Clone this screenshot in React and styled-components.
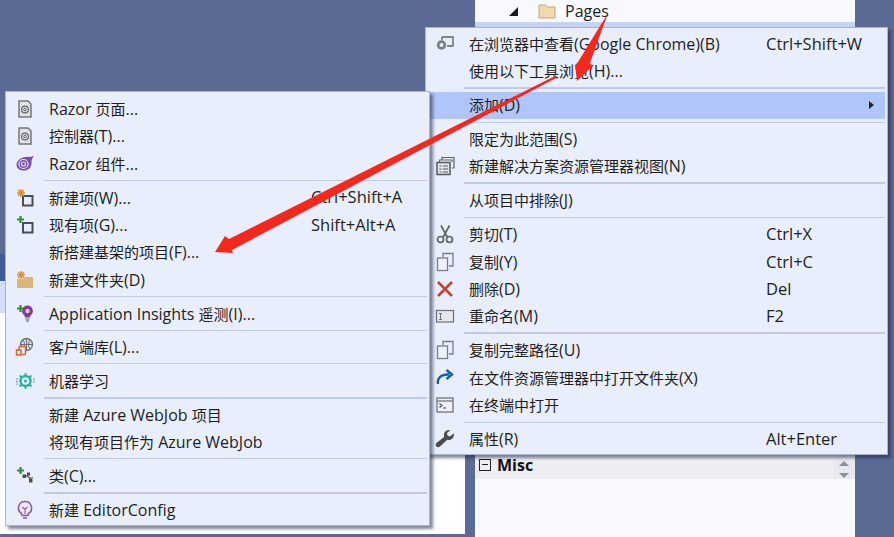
import React from "react";
import styled, { createGlobalStyle } from "styled-components";

const Global = createGlobalStyle`
  html, body { margin: 0; padding: 0; background: #5c6a96; overflow: hidden; }
  #root { width: 894px; height: 537px; }
`;

const Page = styled.div`
  position: relative;
  width: 894px;
  height: 537px;
  display: flex;
  gap: 10px;
  background: #5c6a96;
  font-family: "Open Sans", "Noto Sans CJK SC", sans-serif;
  font-size: 15px;
  line-height: 20px;
  color: #1e1e1e;
  overflow: hidden;
`;

const LeftWindow = styled.div`
  width: 465px;
  height: 534px;
  display: flex;
  flex-direction: column;
  padding-top: 254px;
  box-sizing: border-box;
`;
const DarkBand = styled.div`
  height: 27px;
  background: #3f5b9b;
`;
const PaleBand = styled.div`
  height: 32px;
  background: #d3def4;
`;
const WhiteFill = styled.div`
  flex: 1;
  background: #ffffff;
`;

const RightPanel = styled.div`
  width: 380px;
  display: flex;
  flex-direction: column;
  background: #f8f9fe;
`;
const TreeRow = styled.div`
  height: 22px;
  display: flex;
  align-items: center;
  padding-left: 34px;
  gap: 8px;
`;
const Caret = styled.span`
  width: 0;
  height: 0;
  border-style: solid;
  border-width: 0 0 9px 9px;
  border-color: transparent transparent #1c1c1c transparent;
  margin-right: 11px;
`;
const Selected = styled.div`
  height: 430px;
  background: #c5d3f5;
`;
const MiscRow = styled.div`
  height: 24px;
  margin-top: 3px;
  display: flex;
  align-items: center;
  box-sizing: border-box;
  background: #eeedf2;
  padding: 0 0 4px 4px;
  font-weight: 700;
  font-size: 16px;
  gap: 6px;
  color: #111;
`;
const Collapse = styled.span`
  width: 10px;
  height: 10px;
  border: 1px solid #222;
  position: relative;
  &::after {
    content: "";
    position: absolute;
    left: 2px;
    right: 2px;
    top: 4px;
    height: 1px;
    background: #222;
  }
`;
const Scroll = styled.div`
  margin: 0 0 -4px auto;
  width: 22px;
  align-self: stretch;
  display: flex;
  flex-direction: column;
  align-items: center;
  justify-content: flex-end;
  gap: 7px;
  padding-bottom: 1px;
  box-sizing: border-box;
  background: #e8e8ee;
`;
const ScrollArrow = styled.span`
  width: 0;
  height: 0;
  border-left: 5px solid transparent;
  border-right: 5px solid transparent;
  ${(p) => (p.$down ? "border-top: 5px solid #8b8f9c;" : "border-bottom: 5px solid #8b8f9c;")}
`;

const Menu = styled.div`
  position: absolute;
  left: ${(p) => p.$x}px;
  top: ${(p) => p.$y}px;
  width: ${(p) => p.$w}px;
  height: ${(p) => p.$h}px;
  box-sizing: border-box;
  padding: ${(p) => p.$top}px 2px 0 0;
  background: #e9eefd;
  border: 1px solid #a6b4d8;
  box-shadow: 3px 3px 3px rgba(30, 36, 60, 0.55);
`;
const Row = styled.div`
  height: 27.33px;
  display: grid;
  grid-template-columns: 38px ${(p) => p.$label}px 1fr 16px;
  align-items: center;
  white-space: nowrap;
  background: ${(p) => (p.$hot ? "#b0c6fb" : "transparent")};
`;
const IconSlot = styled.span`
  display: flex;
  justify-content: center;
  align-items: center;
  height: 20px;
`;
const Label = styled.span`
  padding-left: 5px;
`;
const Latin = styled.span`
  font-size: 16px;
  line-height: 1;
`;
const Keys = styled.span`
  font-size: 16.5px;
  line-height: 1;
`;
const SubArrow = styled.span`
  width: 0;
  height: 0;
  border-top: 4px solid transparent;
  border-bottom: 4px solid transparent;
  border-left: 5px solid #222;
`;
const Sep = styled.div`
  height: ${(p) => (p.$thick ? 2 : 1)}px;
  margin: ${(p) => (p.$thick ? "2.33px" : "2.83px")} 0 ${(p) => (p.$thick ? "2.34px" : p.$tight ? "1.84px" : "2.84px")} 38px;
  background: #bfcae8;
`;
const Glyph = styled.svg`
  width: 20px;
  height: 20px;
  display: block;
`;
const Overlay = styled.svg`
  position: absolute;
  left: 0;
  top: 0;
  width: 894px;
  height: 537px;
  pointer-events: none;
`;

const G = "#5f6268";
const Page3 = () => (
  <>
    <path d="M4 2h9l3 3v13H4z" fill="#dfe2ea" stroke="#777" strokeWidth="1.5" />
    <circle cx="10" cy="10.5" r="3.4" fill="none" stroke="#666" strokeWidth="1.2" />
    <circle cx="10" cy="10.5" r="1.3" fill="none" stroke="#666" strokeWidth="1" />
  </>
);
const Square = () => <rect x="8" y="8" width="9.5" height="9.5" fill="#e9eefd" stroke="#4b4d52" strokeWidth="2" />;
const Star = () => (
  <path d="M6 1v8M2 5h8M3 2l6 6M9 2l-6 6" stroke="#d9922e" strokeWidth="1.5" />
);
const Plus = () => <path d="M5.500 1v7M2 4.500h7" stroke="#2f8f3a" strokeWidth="2.2" />;

const icons = {
  page: <Page3 />,
  razor: (
    <>
      <path d="M18.500 2c-2 .5-3 1-4 1C9 2 2 5 1.500 10.500 1.500 15 6 17 10 16.500c4.500-.5 7-4 6.500-9.500.5-2 1.500-3.500 2-5z" fill="#7d4fb0" />
      <circle cx="8.500" cy="10" r="4.500" fill="none" stroke="#e6dff3" strokeWidth="1.200" />
      <circle cx="8.500" cy="10" r="2" fill="none" stroke="#e6dff3" strokeWidth="1.100" />
    </>
  ),
  newItem: (<><Square /><Star /></>),
  existing: (<><Square /><Plus /></>),
  newFolder: (
    <>
      <path d="M2 9h6l2-2h8v11H2z" fill="#dcb577" />
      <Star />
    </>
  ),
  insights: (
    <>
      <path d="M12.500 1.500a5.500 5.500 0 0 1 3 10l-.5 2h-5l-.5-2a5.500 5.500 0 0 1 3-10z" fill="#7f3d94" />
      <circle cx="12.500" cy="7" r="2.200" fill="#e3c6e8" />
      <path d="M10.500 15h4M11 17h3" stroke="#888" strokeWidth="1.500" />
      <Plus />
    </>
  ),
  library: (
    <>
      <circle cx="11.500" cy="7.500" r="6" fill="#d8dbe4" stroke="#6c6f76" strokeWidth="1.300" />
      <path d="M11.500 1.500v12M5.500 7.500h12M8 3c2 3 2 6 0 9M15 3c-2 3-2 6 0 9" fill="none" stroke="#6c6f76" strokeWidth="1" />
      <rect x="4" y="9.500" width="6.500" height="8" rx="1" fill="#e9eefd" stroke="#d8642b" strokeWidth="1.500" />
      <rect x="1.500" y="13" width="4.500" height="5" fill="#e9eefd" stroke="#d8642b" strokeWidth="1.500" />
    </>
  ),
  ml: (
    <>
      <circle cx="10.500" cy="10" r="5" fill="none" stroke="#2fb19a" strokeWidth="2.400" />
      <circle cx="10.500" cy="10" r="1.600" fill="#2fb19a" />
      <path d="M10.500 2v3M10.500 15v3M4.500 4.500l2 2M14.500 13.500l2 2M16.500 4.500l-2 2M6.500 13.500l-2 2" stroke="#2fb19a" strokeWidth="1.800" />
      <path d="M1 8h2M1 10.500h2M1 13h2M18 8h2M18 11h2" stroke="#2fb19a" strokeWidth="1" />
    </>
  ),
  cls: (
    <>
      <path d="M9 11l3-1.500 3 3 3-1" fill="none" stroke="#4b4d52" strokeWidth="1.200" />
      <rect x="7.500" y="8.500" width="3.500" height="3.500" fill="#4b4d52" />
      <rect x="12" y="6.500" width="3" height="3" fill="#4b4d52" />
      <rect x="14" y="13" width="3.500" height="3.500" fill="#4b4d52" />
      <Plus />
    </>
  ),
  bulb: (
    <>
      <path d="M10 1.500a6.500 6.500 0 0 1 3.500 12l-.5 2H7l-.5-2A6.500 6.500 0 0 1 10 1.500z" fill="#efe7f7" stroke="#8b57b5" strokeWidth="1.500" />
      <path d="M10 14V9M7.500 7l2.500 2.500L12.500 7" fill="none" stroke="#8b57b5" strokeWidth="1.100" />
      <path d="M8 18h4" stroke="#8b57b5" strokeWidth="1.500" />
    </>
  ),
  browser: (
    <>
      <path d="M7 3h11v9h-6" fill="none" stroke={G} strokeWidth="1.300" />
      <path d="M7 3v3" stroke={G} strokeWidth="1.300" />
      <circle cx="6.500" cy="11" r="4.700" fill="#7a7d84" />
      <circle cx="6.500" cy="11" r="2" fill="#e9eefd" />
    </>
  ),
  view: (
    <>
      <path d="M7 4V1.500h12V12h-2M4.500 6V4H17v2" fill="none" stroke={G} strokeWidth="1.200" />
      <rect x="2" y="6.500" width="13" height="12" fill="#e2e5ee" stroke="#55585e" strokeWidth="1.500" />
      <path d="M4.500 10h2M8 10h5M4.500 13h2M8 13h5M4.500 16h2M8 16h5" stroke="#55585e" strokeWidth="1" />
    </>
  ),
  cut: (
    <>
      <path d="M6 1.500l6.500 12M14.500 1.500L8 13.500" fill="none" stroke="#606368" strokeWidth="1.700" />
      <circle cx="5.500" cy="15.500" r="3" fill="none" stroke="#606368" strokeWidth="1.700" />
      <circle cx="14.500" cy="15.500" r="3" fill="none" stroke="#606368" strokeWidth="1.700" />
    </>
  ),
  copy: (
    <>
      <path d="M8 5V1.500h10V14h-4" fill="none" stroke="#7a7d84" strokeWidth="1.300" />
      <rect x="2.500" y="6" width="10" height="12.500" fill="#eef1fa" stroke="#7a7d84" strokeWidth="1.300" />
    </>
  ),
  del: <path d="M3 3l14 14M17 3L3 17" stroke="#c4402f" strokeWidth="2.600" />,
  rename: (
    <>
      <rect x="1.500" y="4.500" width="17" height="11.500" fill="#e6e8f0" stroke="#6e7077" strokeWidth="1.200" />
      <path d="M4 7.500h3M5.500 7.500v6M4 13.500h3" stroke="#6e7077" strokeWidth="1" />
    </>
  ),
  open: (
    <path d="M3 16c-1-6 3-10 11-9.500M11.500 2l5.500 4.500-5.500 4.500" fill="none" stroke="#14609e" strokeWidth="2.400" />
  ),
  terminal: (
    <>
      <rect x="2" y="3" width="16" height="14" fill="#eef1fa" stroke="#7a7d84" strokeWidth="1.400" />
      <path d="M2 6h16" stroke="#7a7d84" strokeWidth="1.400" />
      <path d="M4.500 8.500l2.500 2-2.500 2M8 13h3" fill="none" stroke="#44474d" strokeWidth="1.100" />
    </>
  ),
  wrench: (
    <path d="M18.500 4.500l-3.500 3-2.500-1-.5-2.500 3.500-3c-3-.5-6 1-6.500 4-.2 1 0 2 .3 2.700L1.500 14c-1 1-1 2.500 0 3.500s2.500 1 3.500 0l7.300-6.800c1 .3 2 .4 3 .1 2.500-.7 4-3.300 3.700-5.800z" fill="#4a4c51" />
  ),
};

const Mixed = ({ text }) =>
  text.split(/([\u4e00-\u9fff]+)/).map((part, i) =>
    i % 2 ? part : part && <Latin key={i}>{part}</Latin>
  );

const Item = ({ icon, label, keys, hot, sub, width }) => (
  <Row $label={width} $hot={hot}>
    <IconSlot>{icon && <Glyph viewBox="0 0 20 20">{icons[icon]}</Glyph>}</IconSlot>
    <Label><Mixed text={label} /></Label>
    <Keys>{keys}</Keys>
    {sub && <SubArrow />}
  </Row>
);

const rightItems = [
  { icon: "browser", label: "在浏览器中查看(Google Chrome)(B)", keys: "Ctrl+Shift+W" },
  { label: "使用以下工具浏览(H)..." },
  { sep: 2 },
  { label: "添加(D)", hot: true, sub: true },
  { sep: 1 },
  { label: "限定为此范围(S)" },
  { icon: "view", label: "新建解决方案资源管理器视图(N)" },
  { sep: 2 },
  { label: "从项目中排除(J)" },
  { sep: 1 },
  { icon: "cut", label: "剪切(T)", keys: "Ctrl+X" },
  { icon: "copy", label: "复制(Y)", keys: "Ctrl+C" },
  { icon: "del", label: "删除(D)", keys: "Del" },
  { icon: "rename", label: "重命名(M)", keys: "F2" },
  { sep: 2 },
  { icon: "copy", label: "复制完整路径(U)" },
  { icon: "open", label: "在文件资源管理器中打开文件夹(X)" },
  { icon: "terminal", label: "在终端中打开" },
  { sep: 1 },
  { icon: "wrench", label: "属性(R)", keys: "Alt+Enter" },
];

const leftItems = [
  { icon: "page", label: "Razor 页面..." },
  { icon: "page", label: "控制器(T)..." },
  { icon: "razor", label: "Razor 组件..." },
  { sep: 1 },
  { icon: "newItem", label: "新建项(W)...", keys: "Ctrl+Shift+A" },
  { icon: "existing", label: "现有项(G)...", keys: "Shift+Alt+A" },
  { label: "新搭建基架的项目(F)..." },
  { icon: "newFolder", label: "新建文件夹(D)" },
  { sep: 1 },
  { icon: "insights", label: "Application Insights 遥测(I)..." },
  { sep: 1, tight: true },
  { icon: "library", label: "客户端库(L)..." },
  { sep: 1 },
  { icon: "ml", label: "机器学习" },
  { sep: 2 },
  { label: "新建 Azure WebJob 项目" },
  { label: "将现有项目作为 Azure WebJob" },
  { sep: 1 },
  { icon: "cls", label: "类(C)..." },
  { sep: 2 },
  { icon: "bulb", label: "新建 EditorConfig" },
];

const renderMenu = (items, width) =>
  items.map((it, i) =>
    it.sep ? <Sep key={i} $thick={it.sep === 2} $tight={it.tight} /> : <Item key={i} {...it} width={width} />
  );

export default function App() {
  return (
    <Page>
      <Global />
      <LeftWindow>
        <DarkBand />
        <PaleBand />
        <WhiteFill />
      </LeftWindow>
      <RightPanel>
        <TreeRow>
          <Caret />
          <Glyph viewBox="0 0 20 20">
            <path d="M2 4h6l2 2h8v11H2z" fill="#eed9b0" stroke="#c9a66b" strokeWidth="1" />
          </Glyph>
          <Latin>Pages</Latin>
        </TreeRow>
        <Selected />
        <MiscRow>
          <Collapse />
          Misc
          <Scroll>
            <ScrollArrow />
            <ScrollArrow $down />
          </Scroll>
        </MiscRow>
      </RightPanel>

      <Menu $x={425} $y={27} $w={463} $h={428} $top={2.2}>{renderMenu(rightItems, 302)}</Menu>
      <Menu $x={5} $y={91} $w={425} $h={435} $top={3.4}>{renderMenu(leftItems, 267)}</Menu>

      <Overlay viewBox="0 0 894 537">
        <polygon points="608,13 578,62 575,65 577,81 593,66 590,63" fill="#f5281e" />
        <polygon points="555,76 229,239 225,236 215,252 233,253 232,250 556,78" fill="#f5281e" />
      </Overlay>
    </Page>
  );
}
